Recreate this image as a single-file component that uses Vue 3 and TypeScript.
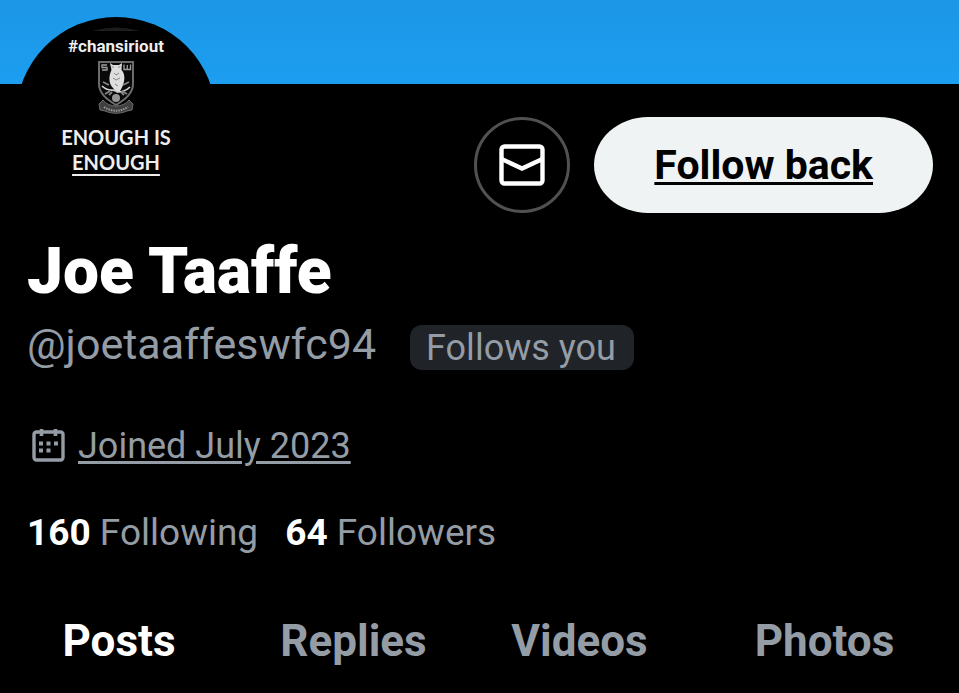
<script setup lang="ts">
import { ref } from 'vue'

interface Stat {
  count: number
  label: string
}

const stats: Stat[] = [
  { count: 160, label: 'Following' },
  { count: 64, label: 'Followers' },
]

const tabs: string[] = ['Posts', 'Replies', 'Videos', 'Photos']
const activeTab = ref('Posts')
</script>

<template>
  <main class="profile">
    <div class="banner"></div>

    <header class="top-row">
      <div class="avatar">
        <svg class="avatar-rim" viewBox="0 0 48 4" aria-hidden="true">
          <path d="M0 4Q24 -3 48 4Z" fill="#1c1c1c" />
        </svg>
        <span class="avatar-tag">#chansiriout</span>
        <svg class="crest" viewBox="0 0 40 56" aria-hidden="true">
          <path d="M3 3H37V25C37 34 30 40 20 46C10 40 3 34 3 25Z" fill="#090909" stroke="#6c6c6c" stroke-width="2" />
          <path d="M11 6H6V8.500H11V11H6M28 5.500V10.500H34.500V5.500M31.300 6V10" fill="none" stroke="#a0a0a0" stroke-width="1.300" />
          <path d="M14 4L17 6H23L26 4L25.500 11C30 15 29 25 24 32L21 34L17 29C12 24 13 16 15.500 11Z" fill="#dedede" />
          <path d="M15.500 8H18M22 8H24.500M18 14L20 16L23 14M17 19L20 21L24 19M19 25L22 27" fill="none" stroke="#888" stroke-width="1" />
          <path d="M6 27C12 33 16 30 20 32S30 32 34 28" fill="none" stroke="#d0d0d0" stroke-width="1.700" />
          <path d="M7 23L13 26M33 23L27 26M9 35L14 32M31 35L26 32M13 36L16 33M28 36L25 33" stroke="#858585" stroke-width="1.800" />
          <circle cx="20" cy="39" r="4" fill="#959595" />
          <path d="M3 45L7 41C13 49 27 49 33 41L37 45L36 51L31 52C24 55 16 55 9 52L4 51Z" fill="#404040" stroke="#6c6c6c" stroke-width="1" />
          <path d="M8 48C16 53 24 53 32 48" fill="none" stroke="#999" stroke-width="2" stroke-dasharray="1.500 1" />
        </svg>
        <span class="avatar-slogan">ENOUGH IS<br /><u>ENOUGH</u></span>
      </div>
      <div class="actions">
        <button class="message" type="button" aria-label="Message">
          <svg viewBox="0 0 46 42" aria-hidden="true">
            <rect x="2.500" y="2.500" width="41" height="37" rx="3" />
            <path d="M2.500 15L23 24.500L43.500 15" />
          </svg>
        </button>
        <button class="follow" type="button">Follow back</button>
      </div>
    </header>

    <section class="details">
      <h1>Joe Taaffe</h1>
      <div class="handle-row">
        <span class="handle">@joetaaffeswfc94</span>
        <span class="badge">Follows you</span>
      </div>
      <div class="joined">
        <svg viewBox="0 0 34 34" aria-hidden="true">
          <rect x="2" y="3" width="29" height="28" rx="2.500" fill="none" stroke="currentColor" stroke-width="3.400" />
          <path d="M9.500 0V7M23.500 0V7" stroke="currentColor" stroke-width="3.600" />
          <path d="M7 12.500h4v4h-4zM14.500 12.500h4v4h-4zM22 12.500h4v4h-4zM7 19.500h4v4h-4zM14.500 19.500h4v4h-4z" fill="currentColor" />
        </svg>
        <a href="#joined">Joined July 2023</a>
      </div>
      <div class="stats">
        <a v-for="stat in stats" :key="stat.label" :href="'#' + stat.label.toLowerCase()">
          <strong>{{ stat.count }}</strong> {{ stat.label }}
        </a>
      </div>
    </section>

    <nav class="tabs" role="tablist">
      <button
        v-for="tab in tabs"
        :key="tab"
        type="button"
        role="tab"
        :aria-selected="activeTab === tab"
        :class="{ active: activeTab === tab }"
        @click="activeTab = tab"
      >
        {{ tab }}
      </button>
    </nav>
  </main>
</template>

<style>
body {
  background: #000;
}
</style>

<style scoped>
.profile {
  box-sizing: border-box;
  min-height: 100vh;
  background: #000;
  color: #949ca5;
  font-family: Roboto, "Liberation Sans", sans-serif;
}

button {
  padding: 0;
  border: 0;
  background: none;
  font: inherit;
  color: inherit;
}

.banner {
  height: 84px;
  background: linear-gradient(#1c96e6, #1d9ef0);
}

.top-row {
  display: flex;
  align-items: flex-end;
  justify-content: space-between;
  margin-top: -67px;
  padding: 0 26px 0 16px;
}

.avatar {
  box-sizing: border-box;
  display: flex;
  flex-direction: column;
  align-items: center;
  width: 200px;
  height: 200px;
  padding-top: 10px;
  border-radius: 50%;
  background: #000;
  color: #eee;
}

.avatar-rim {
  width: 48px;
  height: 4px;
}

.avatar-tag {
  margin-top: 5px;
  font-size: 17px;
  line-height: 20px;
  font-weight: 700;
}

.crest {
  width: 40px;
  height: 56px;
  margin-top: 3px;
}

.avatar-slogan {
  margin-top: 10px;
  font-family: Lato, sans-serif;
  font-size: 20px;
  line-height: 25px;
  font-weight: 700;
  text-align: center;
}

.avatar-slogan u {
  text-decoration-thickness: 2px;
  text-underline-offset: 4px;
}

.actions {
  display: flex;
  gap: 24px;
  margin-bottom: 4px;
}

.message {
  box-sizing: border-box;
  display: flex;
  align-items: center;
  justify-content: center;
  width: 96px;
  height: 96px;
  border: 3px solid #505153;
  border-radius: 50%;
}

.message svg {
  width: 46px;
  height: 42px;
  fill: none;
  stroke: #fff;
  stroke-width: 4.4;
}

.follow {
  height: 96px;
  padding: 0 60px;
  border-radius: 54px / 48px;
  background: #eff3f4;
  color: #000;
  font-size: 41px;
  font-weight: 700;
  text-decoration: underline;
  text-decoration-thickness: 3px;
  text-underline-offset: 3px;
}

.details {
  padding: 19px 27px 0;
  font-size: 36px;
  line-height: 44px;
}

h1 {
  margin: 0;
  color: #fff;
  font-size: 64px;
  line-height: 72px;
  font-weight: 900;
}

.handle-row {
  display: flex;
  align-items: flex-start;
  gap: 34px;
  margin-top: 17px;
}

.handle {
  font-size: 43px;
  line-height: 38px;
}

.badge {
  padding: 2px 18px 0 16px;
  border-radius: 12px;
  background: #202327;
  line-height: 43px;
}

.joined {
  display: flex;
  align-items: center;
  gap: 12px;
  margin-top: 54px;
  padding-left: 5px;
}

.joined svg {
  width: 34px;
  height: 34px;
}

.joined a {
  color: inherit;
  text-decoration-thickness: 3px;
  text-underline-offset: 3px;
}

.stats {
  display: flex;
  gap: 27px;
  margin-top: 43px;
  font-size: 37px;
}

.stats a {
  color: inherit;
  text-decoration: none;
}

.stats strong {
  color: #fff;
  font-weight: 700;
}

.tabs {
  display: grid;
  grid-template-columns: 238fr 231fr 221fr 269fr;
  margin-top: 60px;
}

.tabs button {
  font-size: 44px;
  line-height: 52px;
  font-weight: 700;
}

.tabs .active {
  color: #fff;
}
</style>
